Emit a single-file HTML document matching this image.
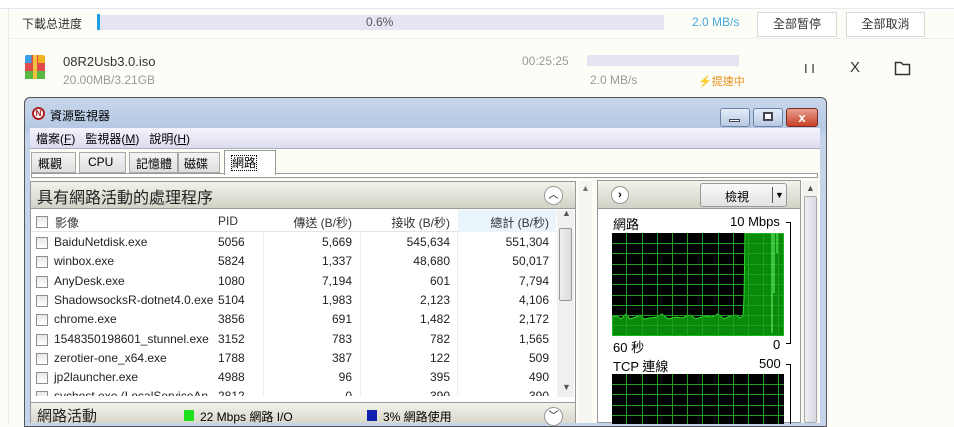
<!DOCTYPE html>
<html><head><meta charset="utf-8"><style>
*{margin:0;padding:0;box-sizing:border-box}
body{width:954px;height:423px;overflow:hidden;background:#fdfdf8;font-family:"Liberation Sans","Noto Sans CJK TC",sans-serif;position:relative}
.a{position:absolute;white-space:nowrap}
.t{font-size:12px;color:#000}
.cb{position:absolute;width:12px;height:12px;border:1px solid #8e8f8f;background:linear-gradient(#e8e8e8,#fff)}
.r{text-align:right}
.g{font-size:13px;color:#555}
</style></head><body>
<div class="a" style="left:0;top:0;width:954px;height:9px;background:#fff;border-bottom:1px solid #e6e6f0"></div>
<div class="a" style="left:8px;top:9px;width:1px;height:414px;background:#e8ecf0"></div>
<div class="a" style="left:9px;top:38px;width:945px;height:1px;background:#eeeeee"></div>
<div class="a g" style="left:22px;top:15px;font-size:12px;color:#333">下載总进度</div>
<div class="a" style="left:97px;top:14px;width:3px;height:16px;background:#1aa0e0"></div>
<div class="a" style="left:100px;top:15px;width:564px;height:15px;background:#e6e4f2"></div>
<div class="a" style="left:366px;top:15px;font-size:12px;color:#555">0.6%</div>
<div class="a" style="left:692px;top:15px;font-size:12px;color:#44a8dc">2.0 MB/s</div>
<div class="a" style="left:757px;top:12px;width:80px;height:25px;border:1px solid #d8d8d8;background:#fff;font-size:12px;text-align:center;line-height:23px;color:#333">全部暂停</div>
<div class="a" style="left:846px;top:12px;width:79px;height:25px;border:1px solid #d8d8d8;background:#fff;font-size:12px;text-align:center;line-height:23px;color:#333">全部取消</div>
<div class="a" style="left:25px;top:55px;width:20px;height:24px;background:linear-gradient(90deg,#3ca0e8 0 33%,#e8443a 33% 66%,#f0b020 66%);border-radius:2px"></div>
<div class="a" style="left:25px;top:63px;width:20px;height:8px;background:#e04a4a"></div>
<div class="a" style="left:25px;top:71px;width:20px;height:8px;background:#58b840"></div>
<div class="a" style="left:33px;top:55px;width:4px;height:24px;background:#f2c040"></div>
<div class="a" style="left:63px;top:54px;font-size:13px;color:#333">08R2Usb3.0.iso</div>
<div class="a" style="left:63px;top:73px;font-size:12px;color:#999">20.00MB/3.21GB</div>
<div class="a" style="left:522px;top:54px;font-size:12px;color:#999">00:25:25</div>
<div class="a" style="left:587px;top:55px;width:152px;height:11px;background:#e6e4f2"></div>
<div class="a" style="left:590px;top:73px;font-size:12px;color:#999">2.0 MB/s</div>
<div class="a" style="left:698px;top:73px;font-size:11px;color:#e8901a">⚡提速中</div>
<div class="a" style="left:804px;top:61px;font-size:13px;color:#333">I I</div>
<div class="a" style="left:850px;top:59px;font-size:15px;color:#333">X</div>
<svg class="a" style="left:894px;top:60px" width="18" height="16"><path d="M1.5 2.5H7L9 4.5H15.5V14.5H1.5Z" fill="none" stroke="#333" stroke-width="1.5"/></svg>
<div class="a" style="left:24px;top:97px;width:803px;height:330px;border:1px solid #555;border-radius:6px 6px 0 0;background:linear-gradient(#c7d6ea,#b5c9e4 30px,#c4d4ea 40px)"></div>
<div class="a" style="left:32px;top:107px;width:13px;height:13px;border-radius:50%;background:#fff;border:2px solid #b02020;font-size:8px;line-height:9px;text-align:center;font-weight:bold;color:#a01818">N</div>
<div class="a t" style="left:50px;top:107px">資源監視器</div>
<div class="a" style="left:720px;top:108px;width:30px;height:19px;border:1px solid #6d83a5;border-radius:3px;background:linear-gradient(#e4ecf7,#b8c9e3)"></div>
<div class="a" style="left:729px;top:119px;width:11px;height:3px;background:#fff;border:1px solid #445"></div>
<div class="a" style="left:753px;top:108px;width:30px;height:19px;border:1px solid #6d83a5;border-radius:3px;background:linear-gradient(#e4ecf7,#b8c9e3)"></div>
<div class="a" style="left:763px;top:112px;width:10px;height:9px;border:2px solid #445;background:#fff"></div>
<div class="a" style="left:786px;top:108px;width:32px;height:19px;border:1px solid #7a2a20;border-radius:3px;background:linear-gradient(#e8a090,#c84028);color:#fff;font-size:13px;font-weight:bold;text-align:center;line-height:17px">x</div>
<div class="a" style="left:30px;top:128px;width:790px;height:295px;background:#fdfdf6"></div>
<div class="a" style="left:30px;top:128px;width:790px;height:21px;background:linear-gradient(#f4f4fc,#dcdcf0);border-bottom:1px solid #a8b0c0"></div>
<div class="a t" style="left:36px;top:130px">檔案(<u>F</u>)&nbsp;&nbsp;&nbsp;監視器(<u>M</u>)&nbsp;&nbsp;&nbsp;說明(<u>H</u>)</div>
<div class="a" style="left:31px;top:173px;width:787px;height:5px;border:1px solid #999;background:#fff"></div>
<div class="a t" style="left:31px;top:152px;width:45px;height:21px;border:1px solid #aaa;background:linear-gradient(#f4f4f4,#dedede);padding:2px 6px">概觀</div>
<div class="a t" style="left:79px;top:152px;width:47px;height:21px;border:1px solid #aaa;background:linear-gradient(#f4f4f4,#dedede);padding:2px 8px">CPU</div>
<div class="a t" style="left:129px;top:152px;width:49px;height:21px;border:1px solid #aaa;background:linear-gradient(#f4f4f4,#dedede);padding:2px 6px">記憶體</div>
<div class="a t" style="left:178px;top:152px;width:42px;height:21px;border:1px solid #aaa;background:linear-gradient(#f4f4f4,#dedede);padding:2px 5px">磁碟</div>
<div class="a t" style="left:224px;top:150px;width:52px;height:25px;border:1px solid #999;border-bottom:none;background:#fff;padding:3px 6px"><span style="border:1px dotted #000">網路</span></div>
<div class="a" style="left:30px;top:181px;width:546px;height:242px;border:1px solid #999;background:#fff"></div>
<div class="a" style="left:31px;top:182px;width:544px;height:27px;background:linear-gradient(#f2f2ea,#d2d2c6);border-bottom:1px solid #999"></div>
<div class="a" style="left:37px;top:184px;font-size:16px;color:#222">具有網路活動的處理程序</div>
<div class="a" style="left:544px;top:186px;width:19px;height:19px;border-radius:50%;border:1px solid #999;background:#fff;font-size:10px;text-align:center;line-height:17px">︿</div>
<div class="a" style="left:31px;top:210px;width:526px;height:22px;background:#fff;border-bottom:1px solid #e4e4e4"></div>
<div class="a" style="left:458px;top:210px;width:98px;height:22px;background:#eaf4fb"></div>
<div class="cb" style="left:36px;top:216px"></div>
<div class="a t" style="left:55px;top:214px;color:#333">影像</div>
<div class="a t" style="left:218px;top:214px;color:#333">PID</div>
<div class="a t r" style="left:262px;top:214px;width:90px;color:#333">傳送 (B/秒)</div>
<div class="a t r" style="left:360px;top:214px;width:90px;color:#333">接收 (B/秒)</div>
<div class="a t r" style="left:455px;top:214px;width:94px;color:#333">總計 (B/秒)</div>
<div class="a" style="left:263px;top:232px;width:1px;height:165px;background:#eee"></div>
<div class="a" style="left:360px;top:232px;width:1px;height:165px;background:#eee"></div>
<div class="a" style="left:457px;top:232px;width:1px;height:165px;background:#eee"></div>
<div class="a" style="left:557px;top:210px;width:17px;height:187px;background:#f0f0f0"></div>
<div class="a" style="left:559px;top:228px;width:13px;height:73px;border:1px solid #999;border-radius:2px;background:linear-gradient(90deg,#eee,#dcdcdc)"></div>
<div class="a" style="left:562px;top:208px;font-size:9px;color:#555">▲</div>
<div class="a" style="left:562px;top:382px;font-size:9px;color:#555">▼</div>
<div id="rows"></div>
<div class="a" style="left:31px;top:402px;width:544px;height:21px;background:linear-gradient(#f2f2ea,#d8d8cc);border-top:1px solid #999"></div>
<div class="a" style="left:37px;top:405px;font-size:15px;color:#222">網路活動</div>
<div class="a" style="left:184px;top:410px;width:10px;height:11px;background:#1ee01e"></div>
<div class="a t" style="left:200px;top:408px">22 Mbps 網路 I/O</div>
<div class="a" style="left:367px;top:410px;width:10px;height:11px;background:#1020b0"></div>
<div class="a t" style="left:383px;top:408px">3% 網路使用</div>
<div class="a" style="left:544px;top:407px;width:19px;height:19px;border-radius:50%;border:1px solid #999;background:#fff;font-size:10px;text-align:center;line-height:17px">﹀</div>
<div class="a" style="left:578px;top:181px;width:14px;height:242px;background:#f6f6f0"></div>
<div class="a" style="left:581px;top:183px;font-size:9px;color:#777">▲</div>
<div class="a" style="left:597px;top:180px;width:204px;height:243px;border:1px solid #999;background:#fff"></div>
<div class="a" style="left:598px;top:181px;width:202px;height:28px;background:linear-gradient(#f2f2ea,#d2d2c6);border-bottom:1px solid #999"></div>
<div class="a" style="left:611px;top:186px;width:18px;height:18px;border-radius:50%;border:1px solid #999;background:#fff;font-size:11px;font-weight:bold;text-align:center;line-height:16px">›</div>
<div class="a t" style="left:700px;top:183px;width:87px;height:24px;border:1px solid #999;border-radius:3px;background:linear-gradient(#fafafa,#e2e2e2);padding:4px 0 0 24px">檢視</div>
<div class="a" style="left:772px;top:187px;width:1px;height:16px;background:#555"></div>
<div class="a" style="left:775px;top:190px;font-size:9px">▼</div>
<div class="a t" style="left:613px;top:214px;font-size:13px">網路</div>
<div class="a t" style="left:730px;top:214px;font-size:13px">10 Mbps</div>
<div class="a" style="left:786px;top:222px;width:5px;height:1px;background:#000"></div>
<div class="a" style="left:790px;top:222px;width:1px;height:122px;background:#000"></div>
<div class="a" style="left:786px;top:343px;width:5px;height:1px;background:#000"></div>
<svg class="a" style="left:612px;top:233px" width="172" height="103">
<rect width="172" height="103" fill="#000"/>
<path d="M0 84 L5 83 L9 86 L14 81 L18 86 L24 84 L28 82 L32 86 L38 85 L45 84 L50 81 L56 86 L64 84 L70 85 L78 82 L84 86 L92 83 L100 84 L106 81 L112 86 L118 83 L124 82 L128 85 L131 83 L132 65 L133 0 L172 0 L172 103 L0 103Z" fill="#0a8a0a" stroke="#2ede2e" stroke-width="1"/>
<g stroke="#1ea01e" stroke-width="1">
<path d="M0 10.5H172M0 20.5H172M0 31.5H172M0 41.5H172M0 51.5H172M0 62.5H172M0 72.5H172M0 82.5H172M0 92.5H172"/>
<path d="M14.5 0V103M30.5 0V103M45.5 0V103M60.5 0V103M75.5 0V103M90.5 0V103M106.5 0V103M121.5 0V103M136.5 0V103M151.5 0V103M166.5 0V103"/>
</g>
<path d="M160 0V100M162 0V60M165 0V20" stroke="#6cff6c" stroke-width="1"/>
</svg>
<div class="a t" style="left:613px;top:337px;font-size:13px">60 秒</div>
<div class="a t" style="left:773px;top:337px;font-size:13px">0</div>
<div class="a t" style="left:613px;top:356px;font-size:13px">TCP 連線</div>
<div class="a t" style="left:759px;top:356px;font-size:13px">500</div>
<div class="a" style="left:786px;top:364px;width:5px;height:1px;background:#000"></div>
<div class="a" style="left:790px;top:364px;width:1px;height:60px;background:#000"></div>
<svg class="a" style="left:612px;top:374px" width="172" height="50">
<rect width="172" height="50" fill="#000"/>
<g stroke="#1ea01e" stroke-width="1">
<path d="M0 10.5H172M0 20.5H172M0 31.5H172M0 41.5H172"/>
<path d="M14.5 0V50M30.5 0V50M45.5 0V50M60.5 0V50M75.5 0V50M90.5 0V50M106.5 0V50M121.5 0V50M136.5 0V50M151.5 0V50M166.5 0V50"/>
</g></svg>
<div class="a" style="left:802px;top:181px;width:16px;height:242px;background:#f4f4ee"></div>
<div class="a" style="left:804px;top:196px;width:13px;height:227px;border:1px solid #aaa;border-radius:2px;background:linear-gradient(90deg,#eee,#d8d8e4)"></div>
<div class="a" style="left:806px;top:183px;font-size:9px;color:#555">▲</div>
<script>
var d=[["BaiduNetdisk.exe","5056","5,669","545,634","551,304"],["winbox.exe","5824","1,337","48,680","50,017"],["AnyDesk.exe","1080","7,194","601","7,794"],["ShadowsocksR-dotnet4.0.exe","5104","1,983","2,123","4,106"],["chrome.exe","3856","691","1,482","2,172"],["1548350198601_stunnel.exe","3152","783","782","1,565"],["zerotier-one_x64.exe","1788","387","122","509"],["jp2launcher.exe","4988","96","395","490"],["svchost.exe (LocalServiceAn","2812","0","390","390"]];
var h="";d.forEach(function(r,i){var y=235+i*19.3;
h+='<div class="cb" style="left:36px;top:'+(y+2)+'px"></div><div class="a t" style="left:54px;top:'+y+'px;color:#222">'+r[0]+'</div><div class="a t" style="left:218px;top:'+y+'px;color:#222">'+r[1]+'</div><div class="a t r" style="left:262px;top:'+y+'px;width:90px;color:#222">'+r[2]+'</div><div class="a t r" style="left:360px;top:'+y+'px;width:90px;color:#222">'+r[3]+'</div><div class="a t r" style="left:455px;top:'+y+'px;width:94px;color:#222">'+r[4]+'</div>';});
h+='<div class="a" style="left:31px;top:396px;width:526px;height:6px;background:#fff"></div>';
document.getElementById("rows").outerHTML=h;
</script>
</body></html>
